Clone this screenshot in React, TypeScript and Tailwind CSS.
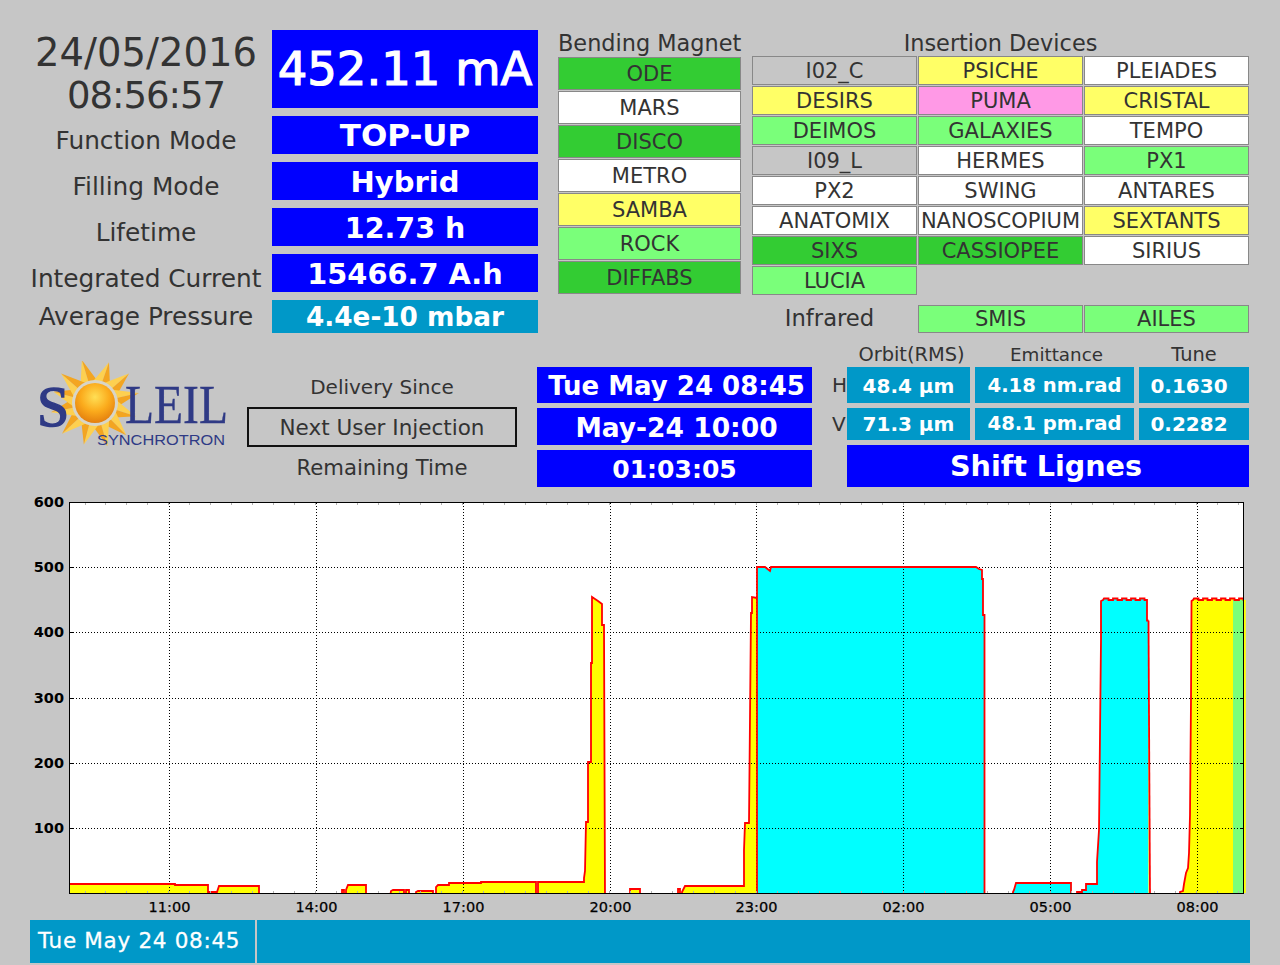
const bm = [
  { name: "ODE", color: "bg-[#33cc33]" },
  { name: "MARS", color: "bg-white" },
  { name: "DISCO", color: "bg-[#33cc33]" },
  { name: "METRO", color: "bg-white" },
  { name: "SAMBA", color: "bg-[#ffff66]" },
  { name: "ROCK", color: "bg-[#7aff7a]" },
  { name: "DIFFABS", color: "bg-[#33cc33]" },
];

const id = [
  { name: "I02_C", color: "bg-[#c6c6c6]" },
  { name: "PSICHE", color: "bg-[#ffff66]" },
  { name: "PLEIADES", color: "bg-white" },
  { name: "DESIRS", color: "bg-[#ffff66]" },
  { name: "PUMA", color: "bg-[#ff99e6]" },
  { name: "CRISTAL", color: "bg-[#ffff66]" },
  { name: "DEIMOS", color: "bg-[#7aff7a]" },
  { name: "GALAXIES", color: "bg-[#7aff7a]" },
  { name: "TEMPO", color: "bg-white" },
  { name: "I09_L", color: "bg-[#c6c6c6]" },
  { name: "HERMES", color: "bg-white" },
  { name: "PX1", color: "bg-[#7aff7a]" },
  { name: "PX2", color: "bg-white" },
  { name: "SWING", color: "bg-white" },
  { name: "ANTARES", color: "bg-white" },
  { name: "ANATOMIX", color: "bg-white" },
  { name: "NANOSCOPIUM", color: "bg-white" },
  { name: "SEXTANTS", color: "bg-[#ffff66]" },
  { name: "SIXS", color: "bg-[#33cc33]" },
  { name: "CASSIOPEE", color: "bg-[#33cc33]" },
  { name: "SIRIUS", color: "bg-white" },
  { name: "LUCIA", color: "bg-[#7aff7a]" },
];

const rows = [
  { label: "Function Mode", value: "TOP-UP", size: "text-[31px]", pad: "pt-0" },
  { label: "Filling Mode", value: "Hybrid", size: "text-[29px]", pad: "pt-1" },
  { label: "Lifetime", value: "12.73 h", size: "text-[28.5px]", pad: "pt-1" },
  { label: "Integrated Current", value: "15466.7 A.h", size: "text-[28.8px]", pad: "pt-1" },
];

type Pt = [number, number];

// flat tops of the top-up periods have a little saw tooth
const saw = (from: number, to: number, low: number, high: number): Pt[] => {
  const out: Pt[] = [];
  for (let x = from, i = 0; x < to; x += 2.25, i++) {
    const y = i % 4 < 2 ? high : low;
    out.push([x, y]);
    out.push([x + 2.25, y]);
  }
  return out;
};

// chart curve, in pixels of the page
const yellowA: Pt[] = [
  [69, 884], [175, 884], [175, 885], [208, 885], [208, 893], [209, 892], [217, 892], [219, 886], [259, 886], [259, 893],
  [342, 893], [342, 890], [344, 890], [344, 893], [346, 893], [346, 890], [348, 885], [366, 885], [366, 893],
  [390, 893], [391, 891], [393, 890], [404, 890], [404, 893], [406, 893], [406, 890], [409, 890], [409, 893],
  [416, 893], [416, 892], [418, 891], [433, 891], [433, 893], [436, 893], [436, 887], [438, 885], [449, 885], [449, 883],
  [481, 883], [481, 882], [536, 882], [536, 893], [538, 893], [538, 882], [584, 882], [584, 878], [585, 871], [586, 822],
  [588, 822], [588, 762], [591, 762], [591, 663], [592, 663], [592, 597], [595, 599], [598, 601], [602, 604], [602, 625],
  [604, 625], [605, 893], [630, 893], [630, 889], [640, 889], [640, 893], [678, 893], [678, 889], [680, 889], [680, 893],
  [682, 893], [682, 892], [685, 886], [744, 886], [744, 850], [745, 823], [749, 823], [751, 613], [752, 613], [752, 597], [757, 598],
];
const cyanA: Pt[] = [
  [757, 893], [757, 567], [765, 567], [770, 571], [771, 567], [976, 567], [979, 569], [982, 570], [982, 579], [983, 579], [983, 615], [984.5, 615], [984.5, 893],
];
const cyanB: Pt[] = [
  [1013, 893], [1013, 892], [1014, 890], [1016, 883], [1071, 883], [1071, 893],
];
const cyanC: Pt[] = [
  [1077, 893], [1077, 892], [1082, 892], [1082, 890], [1086, 890], [1086, 884], [1097, 884], [1097, 862], [1099, 830], [1101, 640], [1101, 601], [1103, 600],
  ...saw(1104, 1146, 600, 598.5), [1147, 600], [1147, 620.5], [1148.5, 620.5],
];
const yellowC: Pt[] = [
  [1148.5, 620.5], [1150, 893],
];
const yellowD: Pt[] = [
  [1180, 893], [1180, 892], [1183, 891], [1184, 884], [1186, 873], [1188, 868], [1189, 853], [1190, 815], [1191, 700], [1191.5, 601], [1193, 600],
  ...saw(1194, 1244, 600, 598.5),
];

const pts = (p: Pt[]) => p.map((a) => a.join(",")).join(" ");
const closed = (p: Pt[]) => pts([...p, [p[p.length - 1][0], 893], [p[0][0], 893]]);
// the red line drops under the axis, the clip below hides that part
const sunk = (p: Pt[]) => pts(p.map(([x, y]): Pt => [x, y === 893 ? 897 : y]));

const hours = [
  { x: 169.5, t: "11:00" },
  { x: 316.5, t: "14:00" },
  { x: 463.5, t: "17:00" },
  { x: 610.5, t: "20:00" },
  { x: 756.5, t: "23:00" },
  { x: 903.5, t: "02:00" },
  { x: 1050.5, t: "05:00" },
  { x: 1197.5, t: "08:00" },
];
const levels = [
  { y: 502.5, t: "600" },
  { y: 567.5, t: "500" },
  { y: 632.5, t: "400" },
  { y: 698.5, t: "300" },
  { y: 763.5, t: "200" },
  { y: 828.5, t: "100" },
];
const minor = Array.from({ length: 56 }, (_, i) => Math.floor(85 + i * 20.98) + 0.5);

function Chart() {
  return (
    <svg width="1280" height="433" viewBox="0 487 1280 433" className="block">
      <defs>
        <clipPath id="plot">
          <rect x="69" y="502" width="1175" height="391" />
        </clipPath>
      </defs>
      <rect x="69.5" y="502.5" width="1174" height="391" fill="#ffffff" />
      <polygon points={closed(yellowA)} fill="#ffff00" />
      <polygon points={closed(cyanA)} fill="#00ffff" />
      <polygon points={closed(cyanB)} fill="#00ffff" />
      <polygon points={closed(cyanC)} fill="#00ffff" />
      <polygon points={closed(yellowC)} fill="#ffff00" />
      <polygon points={closed(yellowD)} fill="#ffff00" />
      <rect x="1233" y="600" width="10.5" height="293" fill="#7aff7a" />
      {hours.map((h) => (
        <line key={h.t} x1={h.x} x2={h.x} y1="503" y2="893" stroke="#000" strokeDasharray="1 2" />
      ))}
      {levels.slice(1).map((l) => (
        <line key={l.t} x1="70" x2="1243" y1={l.y} y2={l.y} stroke="#000" strokeDasharray="1 2" />
      ))}
      <g fill="none" stroke="#ff0000" strokeWidth="1.8" clipPath="url(#plot)">
        <polyline points={sunk(yellowA)} />
        <polyline points={sunk(cyanA)} />
        <polyline points={sunk(cyanB)} />
        <polyline points={sunk(cyanC)} />
        <polyline points={sunk(yellowC)} />
        <polyline points={sunk(yellowD)} />
      </g>
      {minor.map((x) => (
        <g key={x} stroke="#b0b0b0">
          <line x1={x} x2={x} y1="503" y2="505" />
          <line x1={x} x2={x} y1="891" y2="893" />
        </g>
      ))}
      {levels.slice(1).map((l) => (
        <g key={l.t} stroke="#000">
          <line x1="70" x2="73" y1={l.y} y2={l.y} />
          <line x1="1240" x2="1243" y1={l.y} y2={l.y} />
        </g>
      ))}
      <rect x="69.5" y="502.5" width="1174" height="391" fill="none" stroke="#000" />
      {hours.map((h) => (
        <text key={h.t} x={h.x} y="912" textAnchor="middle" fontSize="14.5" fill="#000" stroke="#000" strokeWidth="0.25">{h.t}</text>
      ))}
      {levels.map((l) => (
        <text key={l.t} x="64" y={l.y + 4} textAnchor="end" fontSize="14.5" fontWeight="700" fill="#000">{l.t}</text>
      ))}
    </svg>
  );
}

function Logo() {
  const rays = [-17, 19, 49, 77, 108, 136, 164, 195, 227, 258, 285, 311];
  return (
    <svg width="210" height="92" viewBox="0 0 210 92" className="block">
      <defs>
        <radialGradient id="sun" cx="50%" cy="35%" r="65%">
          <stop offset="0%" stopColor="#ffdf55" />
          <stop offset="55%" stopColor="#fbab1c" />
          <stop offset="100%" stopColor="#e47f0e" />
        </radialGradient>
      </defs>
      {rays.map((a, i) => (
        <g key={a} transform={`translate(58 42) rotate(${a})`}>
          <polygon points={`-9,-20 0,-20 0,${i % 3 === 1 ? -43 : -45}`} fill="#fdd050" />
          <polygon points={`0,-20 9,-20 0,${i % 3 === 1 ? -43 : -45}`} fill="#f3a521" />
        </g>
      ))}
      <circle cx="58" cy="42" r="23" fill="#d8d5c8" />
      <circle cx="58" cy="42" r="20" fill="url(#sun)" />
      <g fontFamily="'Liberation Serif', serif" fill="#2f3a85" stroke="#2f3a85" strokeWidth="0.4">
        <text x="0" y="65" fontSize="58" stroke="#2f3a85" strokeWidth="1.5">S</text>
        <text x="88" y="62" fontSize="55" textLength="103" lengthAdjust="spacingAndGlyphs">LEIL</text>
      </g>
      <text x="60" y="84" fontFamily="'Liberation Sans', sans-serif" fontSize="15.5" fill="#2f3a85" textLength="128" lengthAdjust="spacingAndGlyphs">SYNCHROTRON</text>
    </svg>
  );
}

export default function App() {
  return (
    <div className="w-[1280px] h-[965px] overflow-hidden bg-[#c6c6c6] font-['DejaVu_Sans',sans-serif] text-[#333333]">
      {/* top block */}
      <div className="flex h-[345px] pt-[30px] pl-[30px]">
        <div className="w-[508px] flex flex-col gap-2">
          <div className="flex h-[78px]">
            <div className="w-[232px] text-center text-[38.5px] leading-[42px] pt-0.5">
              24/05/2016
              <br />
              <span className="text-[37px] tracking-[-1px]">08:56:57</span>
            </div>
            <div className="ml-2.5 w-[266px] h-[78px] pt-0.5 bg-[#0000ff] text-white text-[46.5px] [-webkit-text-stroke:1.2px_white] flex items-center justify-center whitespace-nowrap">
              452.11 mA
            </div>
          </div>
          {rows.map((r) => (
            <div key={r.label} className="flex">
              <div className="w-[232px] h-[38px] pt-1.5 text-center text-[24.8px] leading-[38px] whitespace-nowrap">{r.label}</div>
              <div className={`ml-2.5 w-[266px] h-[38px] bg-[#0000ff] text-white font-bold flex items-center justify-center ${r.size} ${r.pad}`}>
                {r.value}
              </div>
            </div>
          ))}
          <div className="flex">
            <div className="w-[232px] h-[33px] text-center text-[24.7px] leading-[34px] whitespace-nowrap">Average Pressure</div>
            <div className="ml-2.5 w-[266px] h-[33px] pt-0.5 bg-[#0098c8] text-white font-bold text-[26.3px] flex items-center justify-center">
              4.4e-10 mbar
            </div>
          </div>
        </div>

        <div className="ml-5 w-[183px]">
          <div className="h-[27px] text-center text-[22.4px] leading-[27px] whitespace-nowrap">Bending Magnet</div>
          <div className="flex flex-col gap-px">
            {bm.map((b) => (
              <div key={b.name} className={`h-[33px] pt-0.5 border border-[#888888] flex items-center justify-center text-[21px] ${b.color}`}>
                {b.name}
              </div>
            ))}
          </div>
        </div>

        <div className="ml-[11px] w-[497px]">
          <div className="h-[26px] text-center text-[22.4px] leading-[27px]">Insertion Devices</div>
          <div className="grid grid-cols-[165px_165px_165px] auto-rows-[29px] gap-px">
            {id.map((d) => (
              <div key={d.name} className={`pt-0.5 border border-[#888888] flex items-center justify-center text-[21px] whitespace-nowrap ${d.color}`}>
                {d.name}
              </div>
            ))}
          </div>
          <div className="mt-2.5 grid grid-cols-[165px_165px_165px] grid-rows-[28px] gap-px">
            <div className="flex items-center justify-center text-[22.7px] leading-none pr-2.5 pb-[2px]">Infrared</div>
            <div className="border border-[#888888] bg-[#7aff7a] flex items-center justify-center text-[21px] leading-none">SMIS</div>
            <div className="border border-[#888888] bg-[#7aff7a] flex items-center justify-center text-[21px] leading-none">AILES</div>
          </div>
        </div>
      </div>

      {/* middle block */}
      <div className="flex h-[142px] pl-[30px]">
        <div className="w-[217px] pt-4 pl-[7px]">
          <Logo />
        </div>
        <div className="w-[270px] pt-[22px] text-center">
          <div className="h-10 leading-10 text-[20px]">Delivery Since</div>
          <div className="h-10 border-2 border-[#111111] leading-[37px] text-[21.5px] whitespace-nowrap">Next User Injection</div>
          <div className="h-10 leading-[41px] text-[21.2px]">Remaining Time</div>
        </div>
        <div className="ml-5 w-[275px] pt-[22px] flex flex-col gap-[5px] text-white font-bold">
          <div className="h-9 pt-[3px] pl-1 bg-[#0000ff] flex items-center justify-center text-[26px] whitespace-nowrap">Tue May 24 08:45</div>
          <div className="h-[37px] pt-[3px] pl-1 bg-[#0000ff] flex items-center justify-center text-[26.5px] whitespace-nowrap">May-24 10:00</div>
          <div className="h-[37px] pt-0.5 bg-[#0000ff] flex items-center justify-center text-[25px]">01:03:05</div>
        </div>
        <div className="ml-5 w-[15px] pt-[22px] text-[20px]">
          <div className="h-9 flex items-center">H</div>
          <div className="h-[32px] mt-[5px] flex items-center">V</div>
        </div>
        <div className="w-[402px]">
          <div className="h-[22px] grid grid-cols-[123px_159px_110px] gap-x-[5px] text-center text-[19.4px] leading-[20px]">
            <div className="pl-1.5 whitespace-nowrap">Orbit(RMS)</div>
            <div className="pl-1 text-[18.3px]">Emittance</div>
            <div>Tune</div>
          </div>
          <div className="grid grid-cols-[123px_159px_110px] grid-rows-[36px_32px] gap-[5px] text-white font-bold text-[20px]">
            <div className="bg-[#0098c8] pt-px flex items-center justify-center whitespace-nowrap">48.4 µm</div>
            <div className="bg-[#0098c8] pt-px flex items-center justify-center whitespace-nowrap text-[19.6px]">4.18 nm.rad</div>
            <div className="bg-[#0098c8] pt-px pr-2.5 flex items-center justify-center whitespace-nowrap">0.1630</div>
            <div className="bg-[#0098c8] flex items-center justify-center whitespace-nowrap">71.3 µm</div>
            <div className="bg-[#0098c8] flex items-center justify-center whitespace-nowrap text-[19.6px]">48.1 pm.rad</div>
            <div className="bg-[#0098c8] pr-2.5 flex items-center justify-center whitespace-nowrap">0.2282</div>
          </div>
          <div className="mt-[5px] h-[42px] bg-[#0000ff] text-white font-bold text-[28.6px] pr-1 flex items-center justify-center">Shift Lignes</div>
        </div>
      </div>

      <Chart />

      {/* footer */}
      <div className="ml-[30px] flex gap-0.5 h-[43px]">
        <div className="w-[225px] bg-[#0098c8] text-white text-[21.5px] tracking-[0.7px] [-webkit-text-stroke:0.3px_white] flex items-center pl-2 whitespace-nowrap">Tue May 24 08:45</div>
        <div className="w-[993px] bg-[#0098c8]" />
      </div>
    </div>
  );
}
